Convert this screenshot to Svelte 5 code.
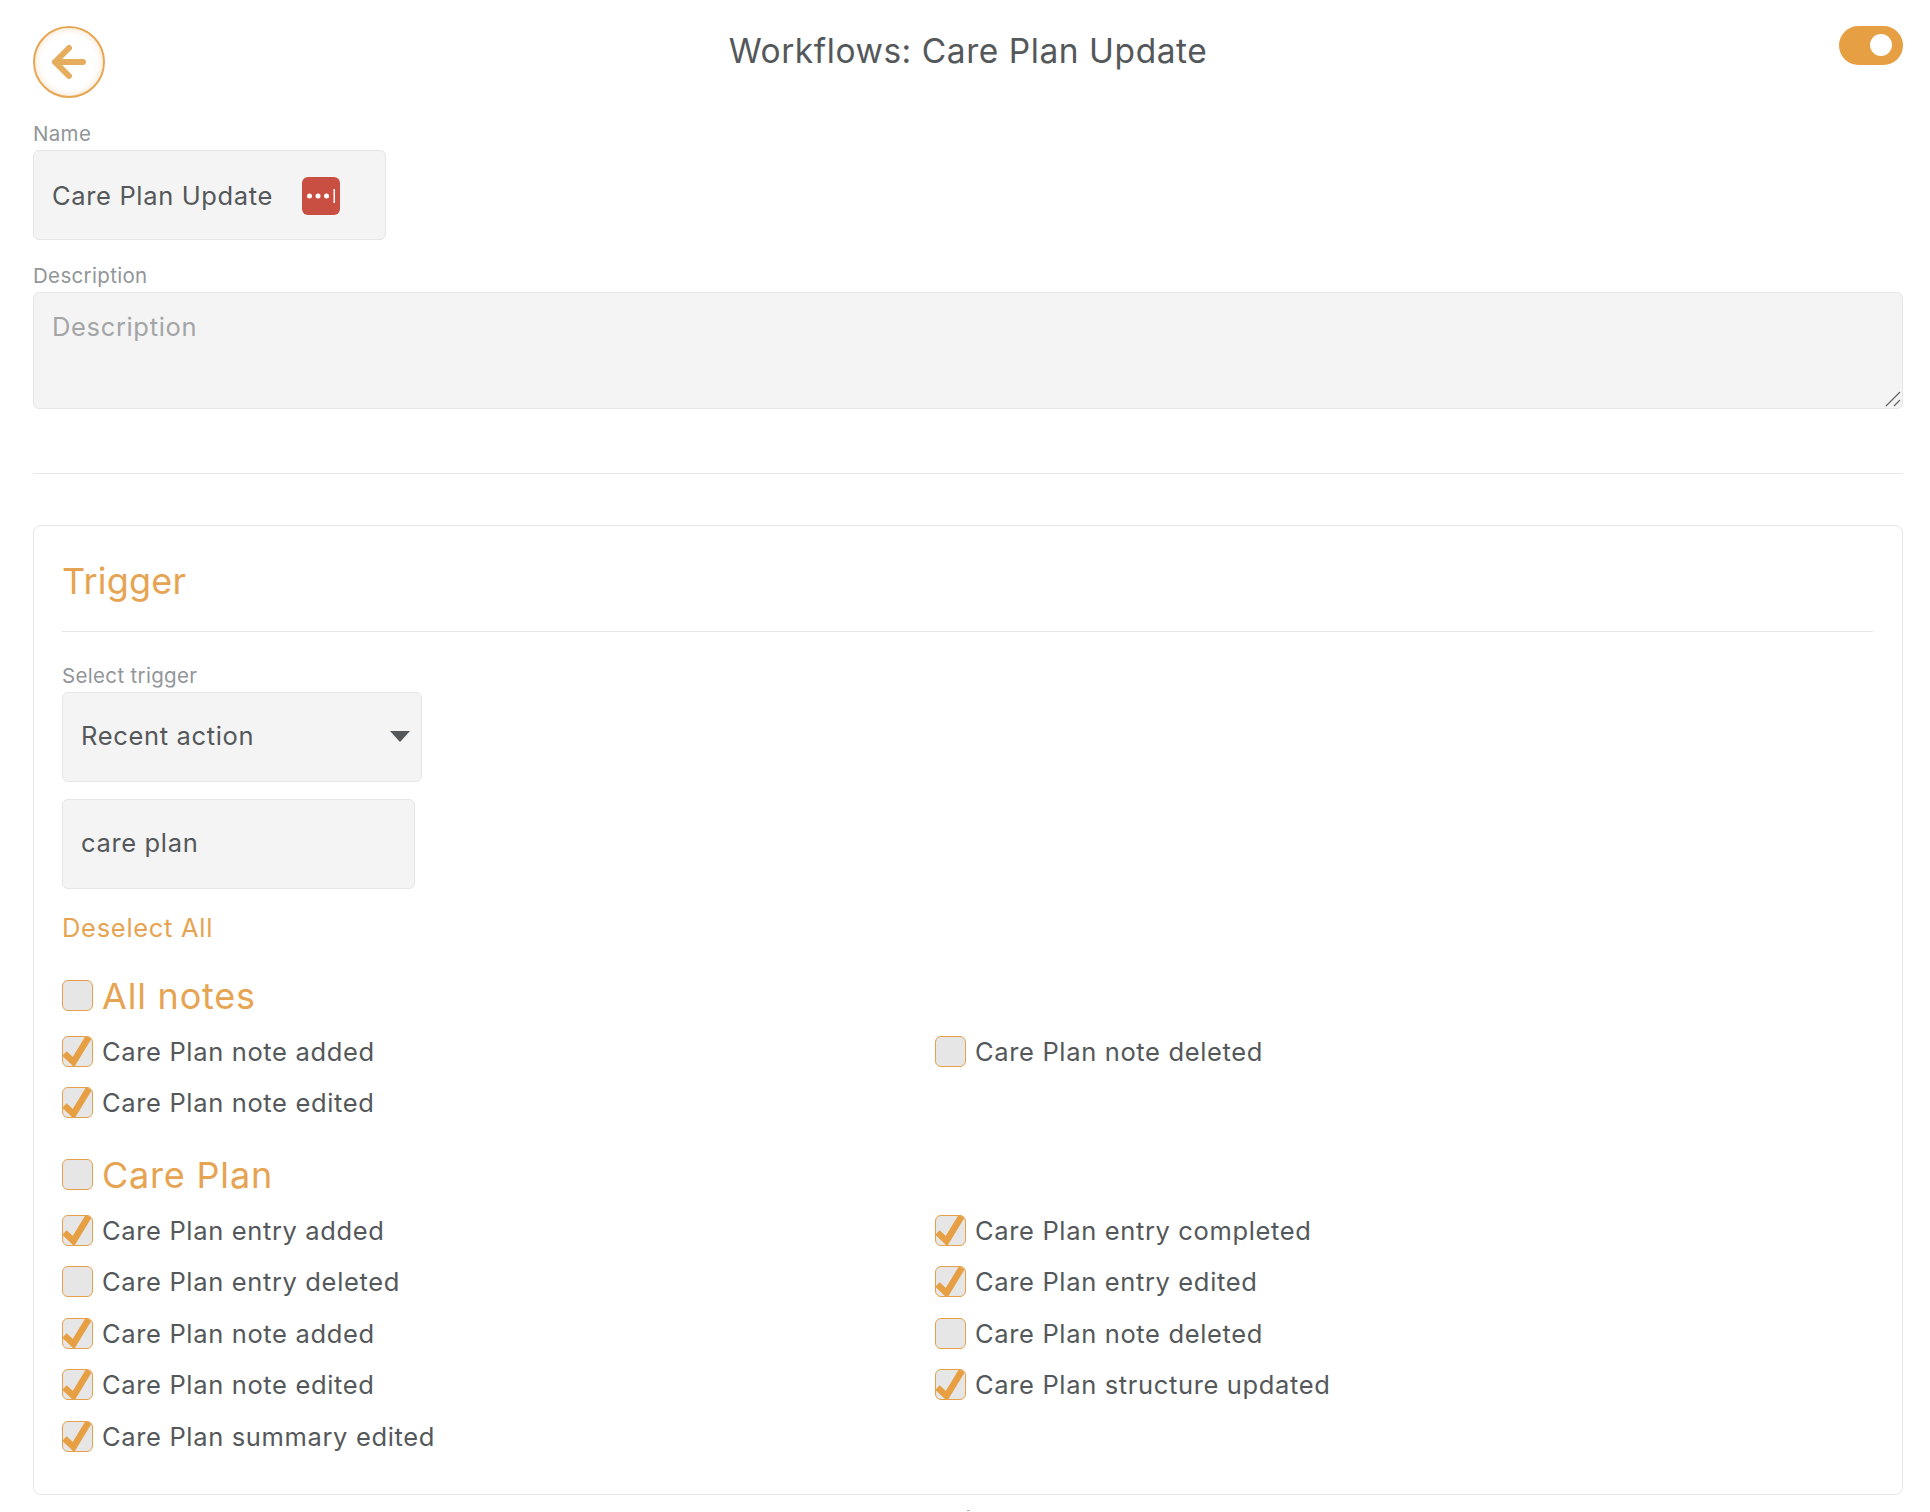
<script>
  const notes = [
    [["Care Plan note added", true], ["Care Plan note deleted", false]],
    [["Care Plan note edited", true]]
  ];
  const plan = [
    [["Care Plan entry added", true], ["Care Plan entry completed", true]],
    [["Care Plan entry deleted", false], ["Care Plan entry edited", true]],
    [["Care Plan note added", true], ["Care Plan note deleted", false]],
    [["Care Plan note edited", true], ["Care Plan structure updated", true]],
    [["Care Plan summary edited", true]]
  ];
  const groups = [
    { title: "All notes", rows: notes, cls: "g1" },
    { title: "Care Plan", rows: plan, cls: "g2" }
  ];
</script>

<div class="page">
  <header class="head">
    <button class="back" aria-label="Back">
      <svg width="40" height="40" viewBox="0 0 40 40"><path d="M34 20H6M20 6 6 20 20 34" fill="none" stroke="#e6ad5e" stroke-width="6" stroke-linecap="round" stroke-linejoin="round"/></svg>
    </button>
    <h1>Workflows: Care Plan Update</h1>
    <div class="toggle"><span></span></div>
  </header>

  <div class="label name-label">Name</div>
  <div class="field name">
    <span>Care Plan Update</span>
    <svg class="pw" width="38" height="38" viewBox="0 0 38 38"><rect width="38" height="38" rx="6" fill="#c94f42"/><circle cx="7.500" cy="19" r="2.500" fill="#fff"/><circle cx="16" cy="19" r="2.500" fill="#fff"/><circle cx="24.500" cy="19" r="2.500" fill="#fff"/><rect x="31.500" y="12" width="1.500" height="14" fill="#fff"/></svg>
  </div>

  <div class="label desc-label">Description</div>
  <div class="field desc">
    <span class="ph">Description</span>
    <svg class="grip" width="16" height="16" viewBox="0 0 16 16"><path d="M1 15 15 1M9 15l6-6" stroke="#666" stroke-width="1.300" fill="none"/></svg>
  </div>

  <hr class="rule" />

  <section class="card">
    <h2>Trigger</h2>
    <hr class="inner" />
    <div class="label sel-label">Select trigger</div>
    <div class="field select"><span>Recent action</span><i class="caret"></i></div>
    <div class="field search"><span>care plan</span></div>
    <div class="deselect">Deselect All</div>

    {#each groups as g}
      <div class="group {g.cls}">
        <div class="gtitle"><span class="box"></span><span>{g.title}</span></div>
        {#each g.rows as row}
          <div class="row">
            {#each row as [text, on]}
              <div class="item">
                <span class="box">
                  {#if on}
                    <svg width="31" height="31" viewBox="0 0 31 31"><path d="M2.500 18.500 11.500 27 27 1.500" fill="none" stroke="#e69f42" stroke-width="6.500" stroke-linejoin="miter"/></svg>
                  {/if}
                </span>
                <span>{text}</span>
              </div>
            {/each}
          </div>
        {/each}
      </div>
    {/each}
  </section>
  <div class="cut"></div>
</div>

<style>
  :global(body) {
    margin: 0;
    background: #fff;
  }
  .page {
    box-sizing: border-box;
    width: 1930px;
    height: 1512px;
    overflow: hidden;
    padding: 0 27px 0 33px;
    font-family: "Inter", "Lato", sans-serif;
    color: #54585a;
  }
  .head {
    position: relative;
    height: 120px;
    padding-top: 26px;
    box-sizing: border-box;
  }
  .back {
    width: 72px;
    height: 72px;
    padding: 0;
    border: 2px solid #e6a652;
    border-radius: 50%;
    background: #fff;
    box-shadow: inset 0 0 7px rgba(230, 160, 74, 0.35);
    display: flex;
    align-items: center;
    justify-content: center;
  }
  h1 {
    position: absolute;
    top: 30px;
    left: 0;
    right: 0;
    margin: 0;
    text-align: center;
    font-size: 33.500px;
    line-height: 42px;
    font-weight: 400;
    letter-spacing: 0.55px;
  }
  .toggle {
    position: absolute;
    top: 26px;
    right: 0;
    width: 64px;
    height: 39px;
    border-radius: 20px;
    background: #e69f42;
  }
  .toggle span {
    position: absolute;
    top: 8px;
    right: 11px;
    width: 22px;
    height: 22px;
    border-radius: 50%;
    background: #fff;
  }
  .label {
    font-size: 20.500px;
    line-height: 28px;
    color: #929699;
    letter-spacing: 0.33px;
  }
  .name-label {
    margin-bottom: 2px;
  }
  .field {
    box-sizing: border-box;
    background: #f4f4f4;
    border: 1.500px solid #e6e6e6;
    border-radius: 6px;
    display: flex;
    align-items: center;
    padding: 0 18px;
    font-size: 25.500px;
    letter-spacing: 0.65px;
  }
  .name {
    width: 353px;
    height: 90px;
    gap: 29px;
  }
  .pw {
    margin-top: 1px;
  }
  .desc-label {
    margin-top: 22px;
    margin-bottom: 1.500px;
  }
  .desc {
    height: 117px;
    align-items: flex-start;
    padding-top: 18px;
    position: relative;
  }
  .ph {
    color: #a3a5a7;
  }
  .grip {
    position: absolute;
    right: 1px;
    bottom: 1px;
  }
  .rule {
    margin: 64px 0 0;
    border: 0;
    border-top: 1.500px solid #e6e6e6;
  }
  .card {
    box-sizing: border-box;
    margin-top: 51px;
    height: 970px;
    border: 1.500px solid #e6e6e6;
    border-radius: 8px;
    padding: 32px 29px 0 28px;
  }
  h2 {
    margin: 0;
    font-size: 36px;
    line-height: 46px;
    font-weight: 400;
    color: #e6a452;
    letter-spacing: 0.2px;
  }
  .inner {
    margin: 27px 0 0;
    border: 0;
    border-top: 1.500px solid #e6e6e6;
  }
  .sel-label {
    margin-top: 30px;
  }
  .select {
    width: 360px;
    height: 90px;
    justify-content: space-between;
    padding-right: 11px;
    padding-bottom: 2px;
    margin-top: 2px;
  }
  .caret {
    width: 0;
    height: 0;
    margin-top: 2px;
    border-left: 10.500px solid transparent;
    border-right: 10.500px solid transparent;
    border-top: 11px solid #54585a;
  }
  .search {
    width: 353px;
    height: 90px;
    padding-bottom: 2px;
    margin-top: 17px;
  }
  .deselect {
    margin-top: 22px;
    font-size: 25.500px;
    line-height: 34px;
    color: #e6a452;
    letter-spacing: 0.7px;
  }
  .g1 {
    margin-top: 28px;
  }
  .g2 {
    margin-top: 23px;
  }
  .gtitle {
    display: flex;
    align-items: center;
    gap: 9px;
    font-size: 36px;
    line-height: 46px;
    color: #e6a452;
    letter-spacing: 0.8px;
  }
  .row {
    display: grid;
    grid-template-columns: 873px 1fr;
    height: 51.500px;
    align-items: center;
    font-size: 25.500px;
    letter-spacing: 0.65px;
  }
  .gtitle + .row {
    margin-top: 7px;
  }
  .item {
    display: flex;
    align-items: center;
    gap: 9px;
  }
  .box {
    box-sizing: border-box;
    position: relative;
    width: 31px;
    height: 31px;
    flex: none;
    background: #e6e6e6;
    border: 1.500px solid #e6a04a;
    border-radius: 6px;
    overflow: hidden;
  }
  .box svg {
    position: absolute;
    left: -1.500px;
    top: -1.500px;
  }
  .cut {
    width: 3px;
    height: 1px;
    margin: 15px auto 0;
    background: #b5b5b5;
  }
</style>
